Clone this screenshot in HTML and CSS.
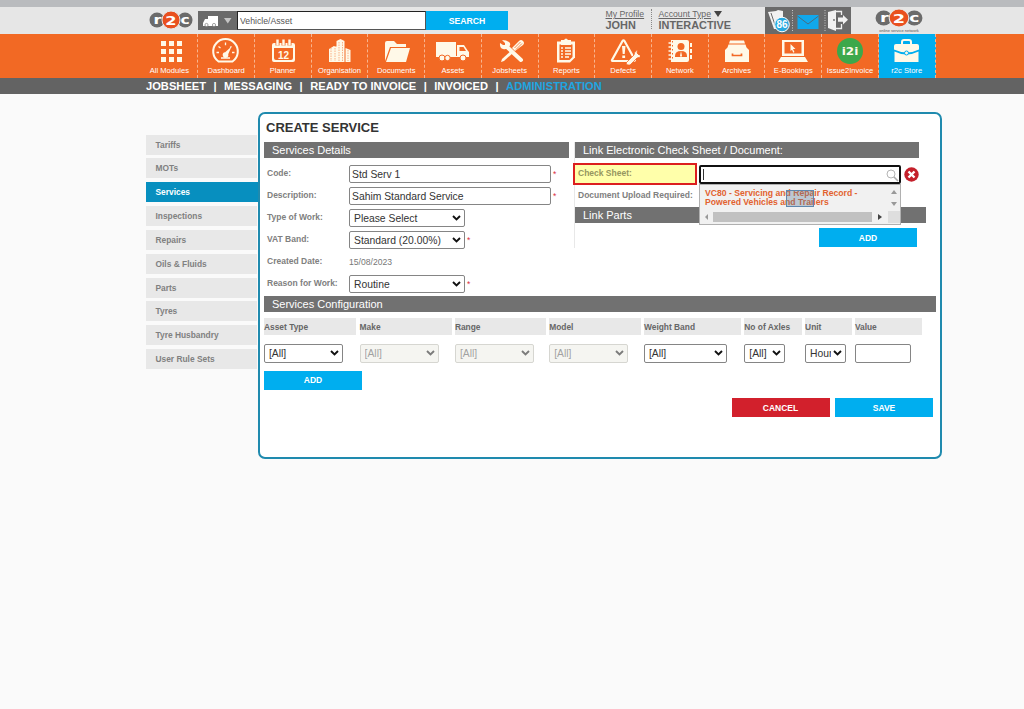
FILE: index.html
```html
<!DOCTYPE html>
<html lang="en">
<head>
  <meta charset="UTF-8">
  <meta name="viewport" content="width=device-width, initial-scale=1.0">
  <title>Create Service</title>
  <link rel="stylesheet" href="styles.css">
</head>
<body>
  <!-- Top bar -->
  <header class="topbar">
    <div class="wrap topbar-inner">
      <svg class="logo" width="44" height="20" viewBox="0 0 44 20">
        <circle cx="8" cy="10" r="7.500" fill="#6b6b6b"/>
        <circle cx="36" cy="10" r="7.500" fill="#6b6b6b"/>
        <circle cx="22" cy="10" r="9" fill="#e9501f" stroke="#e6e6e6"/>
        <text transform="translate(8.500 14) scale(1.350 1)" class="logo-text">r</text>
        <text transform="translate(22 14.500) scale(1.350 1)" class="logo-text">2</text>
        <text transform="translate(36 14) scale(1.300 1)" class="logo-text">c</text>
      </svg>
      <div class="vehicle-picker">
        <svg width="39" height="19" viewBox="0 0 39 19">
          <path d="M10 5h10v8H10zM5 12l2-4h3v5h10v2H5z" fill="#fff"/>
          <circle cx="8.500" cy="14" r="1.600" fill="#fff" stroke="#6a6a6a" stroke-width=".6"/>
          <circle cx="16" cy="14" r="1.600" fill="#fff" stroke="#6a6a6a" stroke-width=".6"/>
          <path d="M26 7h7.500l-3.700 5.500z" fill="#c4c4c4"/>
        </svg>
      </div>
      <input class="search-box" type="text" value="Vehicle/Asset">
      <button class="search-btn">SEARCH</button>
      <div class="profile">
        <a href="#">My Profile</a>
        <strong>JOHN</strong>
      </div>
      <div class="account">
        <a href="#">Account Type</a><i class="caret"></i>
        <strong>INTERACTIVE</strong>
      </div>
      <div class="tools">
        <svg width="86" height="27" viewBox="0 0 86 27">
          <path d="M3 5l6 17h9V4l-5-1-2 1z" fill="#f1f1f1"/>
          <path d="M6 6l5 15" stroke="#6a6a6a" fill="none"/>
          <circle cx="17" cy="17.500" r="7.300" fill="#29a9e0" stroke="#fff"/>
          <text x="17" y="21" class="badge-text">86</text>
          <path d="M27.500 3v22M60 3v22" stroke="#ddd" stroke-width=".8" stroke-dasharray="1 1.500"/>
          <path d="M32.500 8h21v14h-21z" fill="#10a8ec"/>
          <path d="M32.500 9L43 17l10.500-8" stroke="#496d80" stroke-width="1" fill="none"/>
          <path d="M63 5l8-2v21l-8-3z" fill="#f1f1f1"/>
          <path d="M71 4.500h5.500V8M76.500 17v4.500H71" stroke="#f1f1f1" stroke-width="1.300" fill="none"/>
          <path d="M73 10.500h5V8l5 4.700-5 4.700v-2.700h-5z" fill="#f1f1f1"/>
          <circle cx="69" cy="13" r=".9" fill="#6a6a6a"/>
        </svg>
      </div>
      <div class="network-logo">
        <svg width="48" height="20" viewBox="0 0 44 20" preserveAspectRatio="none">
          <circle cx="8" cy="10" r="7.500" fill="#6b6b6b"/>
          <circle cx="36" cy="10" r="7.500" fill="#6b6b6b"/>
          <circle cx="22" cy="10" r="9" fill="#e9501f" stroke="#e6e6e6"/>
          <text transform="translate(8.500 14) scale(1.350 1)" class="logo-text">r</text>
          <text transform="translate(22 14.500) scale(1.350 1)" class="logo-text">2</text>
          <text transform="translate(36 14) scale(1.300 1)" class="logo-text">c</text>
        </svg>
        <span>online service network</span>
      </div>
    </div>
  </header>

  <!-- Module navigation -->
  <nav class="modules">
    <div class="modules-inner">
      <a href="#"><svg viewBox="0 0 34 28"><path d="M9 4h5v5H9zm8 0h5v5h-5zm8 0h5v5h-5zM9 12h5v5H9zm8 0h5v5h-5zm8 0h5v5h-5zM9 20h5v5H9zm8 0h5v5h-5zm8 0h5v5h-5z"/></svg>All Modules</a>
      <a href="#"><svg viewBox="0 0 34 28"><path d="M9.500 24.500a12.300 12.300 0 1 1 14 0z" fill="none" stroke="#fff9e8" stroke-width="2"/><path d="M7.500 15.500H10M9.500 9.500l2 1.500M16.500 5.500v2.800M22.500 9.500l-1.500 1M25.500 15.500H23M12 21h9" stroke="#fff9e8" stroke-width="1.300" fill="none"/><path d="M22.500 9.500l-3.300 7.800a2.800 2.800 0 1 1-3-2z"/></svg>Dashboard</a>
      <a href="#"><svg viewBox="0 0 34 28"><path d="M8 6h19q2 0 2 2v15q0 2-2 2H8q-2 0-2-2V8q0-2 2-2zm0 5v10q0 2 2 2h15q2 0 2-2V11z" fill-rule="evenodd"/><path d="M11.500 2.500v6M17.500 2.500v6M23.500 2.500v6" stroke="#f26924" stroke-width="4"/><path d="M11.500 2.500v6M17.500 2.500v6M23.500 2.500v6" stroke="#fff9e8" stroke-width="2.400"/><text x="17.500" y="21.500" class="cal-text">12</text></svg>Planner</a>
      <a href="#"><svg viewBox="0 0 34 28"><path d="M6 12l5-3v16H6zM10.500 9l4 1v15h-4zM13.500 4l4-2 4 2v21h-8zM22.500 11l5 2v12h-5z"/><path d="M8 11v13M12 11v13M16 5v19M19.500 5v19M25 13v11" stroke="#f26924" stroke-width=".5" stroke-dasharray="1.500 1"/></svg>Organisation</a>
      <a href="#"><svg viewBox="0 0 34 28"><path d="M6 24V6q0-2 2-2h7l3 3h9v3H11z"/><path d="M12 11h19l-4 14H7z"/></svg>Documents</a>
      <a href="#"><svg viewBox="0 0 34 28"><path d="M0 5h20v14H0zM21 8h7l4 6 1 1v5H0v-1h21z"/><path d="M23.500 10h4l2.500 4h-6.500z" fill="#f26924"/><g stroke="#f26924"><circle cx="6" cy="21" r="3"/><circle cx="11.500" cy="21" r="2.700"/><circle cx="27" cy="21" r="3"/></g></svg>Assets</a>
      <a href="#"><svg viewBox="0 0 34 28"><path d="M14 10l14 13" stroke="#fff9e8" stroke-width="4" stroke-linecap="round"/><path d="M9 3l3 3v2h-2L7 6q-.5 5 3 6t6-2 0-5-7-2z"/><path d="M8 25l1-3 10-9 2 2-10 9z"/><path d="M19 11l7-7q2-2 4 0t0 4l-8 6z"/><path d="M21.500 11l6-6M23 12.500l6-6" stroke="#f26924" stroke-width=".8"/></svg>Jobsheets</a>
      <a href="#"><svg viewBox="0 0 34 28"><path d="M8 4.500h18v16l-5 5H8z"/><path d="M10.500 7.500h13V20l-3 3h-10z" fill="#f26924"/><path d="M12 3h3q2-3 4 0h3v5H12z"/><path d="M12 11h2m2 0h6M12 14h2m2 0h6M12 17h2m2 0h6M12 20h2m2 0h4" stroke="#fff9e8" stroke-width="1.400"/></svg>Reports</a>
      <a href="#"><svg viewBox="0 0 34 28"><path d="M6 23L16.500 4q1-1.500 2 0L29 23q0 1-1.500 1H7q-1.500 0-1-1z" fill="none" stroke="#fff9e8" stroke-width="2.200"/><path d="M16 9h3.500l-.8 8h-2zM16.300 18.500h2.800V21h-2.800z"/><path d="M20 26l8-8q0-4 4-5l-1 3 2 2 3-1q-1 4-5 4l-7 7q-3 1-4-2z" stroke="#f26924" stroke-width=".8"/></svg>Defects</a>
      <a href="#"><svg viewBox="0 0 34 28"><path d="M8 3h16q2 0 2 2v18q0 2-2 2H8zM27 6h2v4h-2zM27 12h2v4h-2zM27 18h2v4h-2z"/><path d="M5.500 6h5M5.500 10h5M5.500 14h5M5.500 18h5M5.500 22h5" stroke="#fff9e8" stroke-width="1.500"/><path d="M9.500 4v20" stroke="#f26924" stroke-dasharray="1.500 2.500"/><circle cx="18" cy="9.500" r="3.500" fill="#f26924"/><path d="M12 19q0-5 6-5t6 5v1H12z" fill="#f26924"/><path d="M18 14l-1 5 1 1 1-1z"/></svg>Network</a>
      <a href="#"><svg viewBox="0 0 34 28"><path d="M10 3.500h14l1 3H9zM8.500 7.500h17l1 3h-19zM5 13h24v12H5z"/><path d="M5 13l4-4h16l4 4z"/><path d="M12.500 16.500v2h9v-2" stroke="#f26924" stroke-width="1.700" fill="none"/></svg>Archives</a>
      <a href="#"><svg viewBox="0 0 34 28"><path d="M6 3h22v16H6zM8.500 5v11.500h17V5z" fill-rule="evenodd"/><path d="M5 20h24l3 5H2z"/><path d="M14.500 7l5 5h-2.500l1.500 3-1.200.7-1.300-3-1.500 1.300z"/></svg>E-Bookings</a>
      <a href="#"><svg viewBox="0 0 34 28"><circle cx="17" cy="14" r="13" fill="#3ca84b"/><text transform="translate(17 17.500) scale(1.200 1)" class="i2i-text">i2i</text></svg>Issue2Invoice</a>
      <a href="#" class="store"><svg viewBox="0 0 34 28"><path d="M12 7V5q0-2 2-2h5q2 0 2 2v2" fill="none" stroke="#fff9e8" stroke-width="2"/><path d="M6 7h21q2 0 2 2v3.500q-12 6-25 0V9q0-2 2-2zM4.500 14.500q12 6 24 0V25h-24z"/><circle cx="16.500" cy="16" r="2" stroke="#00aeef"/></svg>r2c Store</a>
    </div>
  </nav>

  <nav class="subnav">
    <div class="wrap">
      <a href="#">JOBSHEET</a><i>|</i><a href="#">MESSAGING</a><i>|</i><a href="#">READY TO INVOICE</a><i>|</i><a href="#">INVOICED</a><i>|</i><a href="#" class="current">ADMINISTRATION</a>
    </div>
  </nav>

  <div class="wrap page">
    <!-- Side menu -->
    <aside class="side-menu">
      <a href="#">Tariffs</a>
      <a href="#">MOTs</a>
      <a href="#" class="active">Services</a>
      <a href="#">Inspections</a>
      <a href="#">Repairs</a>
      <a href="#">Oils &amp; Fluids</a>
      <a href="#">Parts</a>
      <a href="#">Tyres</a>
      <a href="#">Tyre Husbandry</a>
      <a href="#">User Rule Sets</a>
    </aside>

    <main class="panel">
      <h1>CREATE SERVICE</h1>
      <div class="columns">
        <section class="details">
          <h2>Services Details</h2>
          <div class="row"><label>Code:</label><input class="wide" type="text" value="Std Serv 1"><em>*</em></div>
          <div class="row"><label>Description:</label><input class="wide" type="text" value="Sahim Standard Service"><em>*</em></div>
          <div class="row"><label>Type of Work:</label><select><option>Please Select</option></select></div>
          <div class="row"><label>VAT Band:</label><select><option>Standard (20.00%)</option></select><em>*</em></div>
          <div class="row"><label>Created Date:</label><span class="date">15/08/2023</span></div>
          <div class="row"><label>Reason for Work:</label><select><option>Routine</option></select><em>*</em></div>
        </section>

        <section class="links">
          <h2 class="link-sheet">Link Electronic Check Sheet / Document:</h2>
          <div class="sheet-row">
            <label class="highlight">Check Sheet:</label>
            <div class="lookup">
              <span class="cursor"></span>
              <svg class="magnifier" width="13" height="13" viewBox="0 0 13 13"><circle cx="5" cy="5" r="4" fill="none" stroke="#b5b5b5"/><path d="M8 8l4 4" stroke="#aaa" stroke-width="1.600"/></svg>
              <!-- Lookup results -->
              <div class="results">
                <p>VC80 - Servicing and Repair Record -<br>Powered Vehicles and Trailers</p>
                <span class="selection"></span>
                <div class="v-arrows"><i class="up"></i><i class="down"></i></div>
                <div class="h-scroll"><i class="left"></i><b></b><i class="right"></i><u></u></div>
              </div>
            </div>
            <svg class="remove" width="15" height="15" viewBox="0 0 15 15"><circle cx="7.500" cy="7.500" r="7.200" fill="#c4202b"/><path d="M4.500 4.500l6 6m0-6l-6 6" stroke="#fff" stroke-width="2.400"/></svg>
          </div>
          <div class="upload-row"><label>Document Upload Required:</label></div>
          <h2 class="link-parts">Link Parts</h2>
          <button class="btn add-part">ADD</button>
        </section>
      </div>

      <section class="config">
        <h2>Services Configuration</h2>
        <div class="grid head">
          <span>Asset Type</span><span>Make</span><span>Range</span><span>Model</span><span>Weight Band</span><span>No of Axles</span><span>Unit</span><span>Value</span>
        </div>
        <div class="grid cells">
          <select><option>[All]</option></select>
          <select disabled><option>[All]</option></select>
          <select disabled><option>[All]</option></select>
          <select disabled><option>[All]</option></select>
          <select class="band"><option>[All]</option></select>
          <select class="small"><option>[All]</option></select>
          <select class="small"><option>Hours</option></select>
          <input type="text">
        </div>
        <button class="btn">ADD</button>
        <div class="actions">
          <button class="btn cancel">CANCEL</button>
          <button class="btn">SAVE</button>
        </div>
      </section>
    </main>
  </div>
</body>
</html>
```
FILE: styles.css
```css
* {
  box-sizing: border-box;
}
body {
  margin: 0;
  font-family: "Liberation Sans", Arial, sans-serif;
  font-size: 8.300px;
  background-color: #fafafa;
  color: #777;
}
a {
  color: inherit;
  text-decoration: none;
}
button, input, select {
  font-family: inherit;
  margin: 0;
  border-radius: 0;
}
.wrap {
  width: 796px;
  margin-left: 146px;
}

/* Top bar */
.topbar {
  height: 34px;
  border-top: 7px solid #b9bbbe;
  background-color: #e6e6e6;
}
.topbar-inner {
  display: flex;
  height: 27px;
}
.logo {
  margin: 3px 5px 0 3px;
}
.logo-text {
  font-family: "DejaVu Sans", sans-serif;
  font-size: 12px;
  font-weight: bold;
  fill: #fff;
  text-anchor: middle;
}
.vehicle-picker {
  width: 39px;
  height: 19px;
  margin-top: 4px;
  background-color: #6a6a6a;
}
.search-box {
  width: 189px;
  height: 19px;
  margin-top: 4px;
  padding: 0 2px;
  border: 1px solid #555;
  border-top-color: #222;
  border-left-color: #222;
  background: #fff;
  color: #555;
  font-size: 8.700px;
}
.search-btn {
  width: 82px;
  height: 19px;
  margin-top: 4px;
  padding: 0;
  border: none;
  background-color: #00aeef;
  color: #fff;
  font-size: 8.700px;
  font-weight: bold;
}
.profile, .account {
  margin-top: 2px;
  font-size: 8.700px;
  line-height: 11px;
  color: #666;
  white-space: nowrap;
}
.profile {
  width: 46px;
  height: 20px;
  margin-left: 97.500px;
  border-right: 1px dotted #888;
}
.profile a, .account a {
  text-decoration: underline;
}
.profile strong, .account strong {
  display: block;
  font-size: 10.900px;
  line-height: 10px;
}
.account {
  width: 106.500px;
  margin-left: 7px;
}
.caret {
  display: inline-block;
  margin-left: 3px;
  border: 4px solid transparent;
  border-top: 6px solid #444;
  border-bottom: none;
}
.tools {
  width: 86px;
  height: 27px;
  background-color: #6a6a6a;
}
.badge-text {
  font-size: 10px;
  font-weight: bold;
  fill: #fff;
  text-anchor: middle;
}
.network-logo {
  width: 48px;
  margin: 1px 0 0 24px;
}
.network-logo svg {
  display: block;
}
.network-logo span {
  display: block;
  font-size: 4px;
  line-height: 5px;
  text-align: center;
  white-space: nowrap;
  color: #555;
}

/* Module navigation */
.modules {
  height: 44px;
  background-color: #f26924;
}
.modules-inner {
  display: flex;
  width: 794px;
  margin-left: 141.500px;
}
.modules a {
  flex: 1;
  display: flex;
  flex-direction: column;
  align-items: center;
  height: 44px;
  padding-top: 3px;
  border-right: 1px dashed #f8b48e;
  color: #fff;
  font-size: 7.600px;
  line-height: 12px;
  white-space: nowrap;
}
.modules svg {
  flex: none;
  width: 34px;
  height: 28px;
  fill: #fff9e8;
}
.modules .store {
  background-color: #00aeef;
}
.cal-text {
  font-size: 10px;
  font-weight: bold;
  text-anchor: middle;
}
.i2i-text {
  font-family: "DejaVu Sans", sans-serif;
  font-size: 10px;
  font-weight: bold;
  text-anchor: middle;
}
.subnav {
  height: 16px;
  background-color: #636363;
  color: #fff;
  font-size: 11.150px;
  font-weight: bold;
  line-height: 16px;
}
.subnav .wrap {
  display: flex;
}
.subnav i {
  width: 18px;
  text-align: center;
  font-style: normal;
}
.subnav .current {
  color: #1fa5e0;
}

/* Page body */
.page {
  display: flex;
  padding-top: 18px;
}
.side-menu {
  display: flex;
  flex-direction: column;
  gap: 3.850px;
  width: 112px;
  padding-top: 22.500px;
}
.side-menu a {
  width: 111px;
  height: 20px;
  padding-left: 9.500px;
  background-color: #e8e8e8;
  color: #808080;
  font-size: 8.400px;
  font-weight: bold;
  line-height: 20px;
}
.side-menu .active {
  width: 113px;
  background-color: #078fbf;
  color: #fff;
}
.panel {
  width: 684px;
  height: 347px;
  padding: 7px 4px;
  border: 2px solid #1f8aae;
  border-radius: 7px;
  background-color: #fff;
}
h1 {
  margin: 0 0 7px 2px;
  color: #333;
  font-size: 13px;
  line-height: 14px;
}
h2 {
  height: 16px;
  margin: 0;
  padding-left: 8px;
  background-color: #717171;
  color: #fff;
  font-size: 11px;
  font-weight: normal;
  line-height: 16px;
}
.columns {
  display: flex;
  gap: 5px;
  height: 154px;
}
.details {
  width: 305px;
}
.details h2 {
  margin-bottom: 5px;
}
.row {
  display: flex;
  align-items: center;
  height: 22px;
}
label {
  font-size: 8.500px;
  font-weight: bold;
  color: #808080;
}
.row label {
  width: 85px;
  padding: 0 0 3px 3px;
}
.panel input, select {
  height: 18.500px;
  padding: 0 2px;
  border: 1px solid #858585;
  border-radius: 2px;
  background-color: #fff;
  color: #333;
  font-size: 10.350px;
}
.panel .wide {
  width: 202px;
}
select {
  appearance: none;
  width: 116px;
  padding: 0 14px 0 4px;
  background: #fff url("data:image/svg+xml,%3Csvg xmlns='http://www.w3.org/2000/svg' width='9' height='6'%3E%3Cpath d='M1 1l3.500 3.500L8 1' fill='none' stroke='%23111' stroke-width='1.900'/%3E%3C/svg%3E") no-repeat right 3px center;
}
select:disabled {
  border-color: #b5b5ac;
  background-color: #eeeee6;
  color: #555;
  opacity: .55;
}
.row em {
  margin-left: 2px;
  color: #d9303e;
  font-size: 8.500px;
  font-style: normal;
}
.date {
  font-size: 8.600px;
}

/* Check sheet lookup */
.links {
  width: 352px;
  height: 106px;
  border-left: 1px solid #e8e8e8;
}
.link-sheet {
  width: 344px;
}
.sheet-row {
  display: flex;
  height: 27px;
  padding-top: 5px;
}
.highlight {
  width: 124px;
  height: 22px;
  margin-left: -2px;
  padding-left: 3px;
  border: 2.500px solid #dc1f1f;
  background-color: #ffffaa;
  color: #96965f;
  line-height: 16px;
}
.lookup {
  position: relative;
  display: flex;
  justify-content: space-between;
  width: 202px;
  height: 19px;
  margin: 2px 0 0 2px;
  padding: 2px 0 0 2px;
  border: 2px solid #111;
  border-radius: 2px;
  background-color: #fff;
}
.cursor {
  width: 1px;
  height: 11px;
  background-color: #333;
}
.remove {
  margin: 4px 0 0 3px;
}
.results {
  position: absolute;
  top: 17px;
  left: -2px;
  width: 202px;
  height: 41px;
  border: 1px solid #b0b0b0;
  background-color: #f1f1f1;
}
.results p {
  margin: 4px 0 0 5px;
  color: #e2622f;
  font-size: 8.650px;
  font-weight: bold;
  line-height: 9.200px;
  white-space: nowrap;
}
.selection {
  position: absolute;
  top: 5px;
  left: 86px;
  width: 28px;
  height: 17px;
  border: 1px solid #5f87ad;
  background-color: rgba(90, 120, 150, .35);
}
.v-arrows {
  position: absolute;
  top: 5px;
  right: 3px;
  display: flex;
  flex-direction: column;
  gap: 8px;
}
.v-arrows i {
  border: 3px solid transparent;
}
.v-arrows .up {
  border-top: none;
  border-bottom: 4px solid #999;
}
.v-arrows .down {
  border-bottom: none;
  border-top: 4px solid #999;
}
.h-scroll {
  display: flex;
  align-items: center;
  height: 12px;
  margin-top: 4px;
  padding-left: 5px;
}
.h-scroll i {
  border: 3px solid transparent;
}
.h-scroll .left {
  border-left: none;
  border-right: 3px solid #999;
}
.h-scroll .right {
  margin: 0 6px;
  border-right: none;
  border-left: 4px solid #444;
}
.h-scroll b {
  width: 159px;
  height: 10px;
  margin-left: 5px;
  background-color: #c1c1c1;
}
.h-scroll u {
  flex: 1;
  height: 12px;
  background-color: #dedede;
}
.upload-row {
  height: 22px;
  padding: 4.500px 0 0 3px;
}
.add-part {
  margin: 5px 0 0 244px;
}

/* Buttons */
.btn {
  display: block;
  width: 98px;
  height: 19px;
  padding: 0;
  border: none;
  background-color: #00aeef;
  color: #fff;
  font-size: 8.500px;
  font-weight: bold;
}
.cancel {
  background-color: #d2202c;
}

/* Services configuration */
.config h2 {
  width: 672px;
}
.grid {
  display: grid;
  grid-template-columns: 92.300px 92px 91px 91.500px 97px 57.500px 46.500px 67px;
  column-gap: 3.300px;
}
.head {
  margin-top: 5.500px;
}
.head span {
  height: 17.500px;
  background-color: #e8e8e8;
  color: #666;
  font-size: 8.400px;
  font-weight: bold;
  line-height: 18px;
}
.cells {
  margin: 9px 0 8px;
}
.cells select {
  width: 79px;
}
.cells .band {
  width: 83px;
}
.cells .small {
  width: 41px;
}
.cells input {
  width: 56px;
}
.actions {
  display: flex;
  gap: 5.500px;
  margin: 8.500px 0 0 467.500px;
}
```
